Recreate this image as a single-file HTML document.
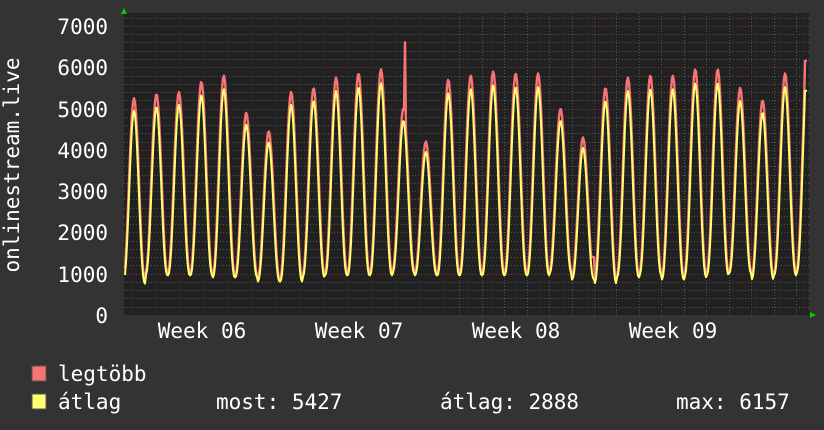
<!DOCTYPE html>
<html><head><meta charset="utf-8"><style>
html,body{margin:0;padding:0;background:#333;width:824px;height:430px;overflow:hidden}
svg{display:block}
text{font-family:"DejaVu Sans Mono","Liberation Mono",monospace;fill:#fff;font-size:21px}
</style></head><body>
<svg id="g" width="824" height="430" viewBox="0 0 824 430" xmlns="http://www.w3.org/2000/svg">
<rect width="824" height="430" fill="#333"/>
<rect x="124" y="13" width="685" height="302" fill="#212121"/>
<g id="grid"></g>
<path id="red" fill="none" stroke="#f87474" stroke-width="2.4" stroke-linejoin="round"/>
<path id="yel" fill="none" stroke="#ffff70" stroke-width="2" stroke-linejoin="round"/>
<polygon points="121,14 127,14 124,8" fill="#0c0"/>
<polygon points="810,312 810,318 816,315" fill="#0c0"/>
<g text-anchor="end">
<text x="108" y="323">0</text>
<text x="108" y="282">1000</text>
<text x="108" y="240">2000</text>
<text x="108" y="199">3000</text>
<text x="108" y="158">4000</text>
<text x="108" y="117">5000</text>
<text x="108" y="75">6000</text>
<text x="108" y="34">7000</text>
</g>
<g text-anchor="middle">
<text x="202" y="338">Week 06</text>
<text x="359" y="338">Week 07</text>
<text x="516" y="338">Week 08</text>
<text x="673" y="338">Week 09</text>
</g>
<text transform="translate(19,165) rotate(-90)" text-anchor="middle">onlinestream.live</text>
<rect x="32" y="366" width="14" height="15" fill="#f87474" stroke="#555" stroke-width="1"/>
<rect x="32" y="394" width="14" height="15" fill="#ffff70" stroke="#555" stroke-width="1"/>
<text x="58" y="381">legtöbb</text>
<text x="58" y="409">átlag</text>
<text x="216" y="409">most: 5427</text>
<text x="440" y="409">átlag: 2888</text>
<text x="676" y="409">max: 6157</text>
</svg>
<script>
var NS="http://www.w3.org/2000/svg",grid=document.getElementById('grid');
function ln(x1,y1,x2,y2,c){var l=document.createElementNS(NS,'line');l.setAttribute('x1',x1);l.setAttribute('y1',y1);l.setAttribute('x2',x2);l.setAttribute('y2',y2);l.setAttribute('stroke',c);l.setAttribute('stroke-width',1);l.setAttribute('stroke-dasharray','1,2');grid.appendChild(l);}
function Y(v){return 315-v*0.04129;}
for(var v=200;v<=7200;v+=200){var y=Math.round(Y(v))+0.5;if(y<13)break;ln(124,y,809,y,v%1000==0?'#7a3a3a':'#555');}
for(var k=-6;k<30;k++){var x=594+22.47*k;if(x<126||x>808)continue;x=Math.round(x)+0.5;ln(x,13,x,318,(k%7==0)?'#7a3a3a':'#555');}
var peaks=[5250,5350,5400,5650,5800,4900,4450,5400,5500,5750,5850,5950,5000,4200,5700,5800,5900,5850,5850,5000,4300,5500,5750,5800,5800,5950,5950,5500,5200,5850,6350,6300];
var lows=[800,1000,1000,1000,950,950,850,850,950,1000,1000,1000,1050,1000,1000,1000,1000,1000,1000,1050,900,800,950,1000,900,950,1000,1050,900,1000,1050,1050];
var r="",yl="";
for(var x=125;x<=807;x+=1){
 var t=(x-134)/22.45+0.5;var d=Math.floor(t);var f=t-d;
 var i=Math.max(0,Math.min(peaks.length-1,d));
 var pk=peaks[Math.max(0,Math.min(peaks.length-1,Math.round((x-134)/22.45)))];
 var lo=lows[i];
 var s=Math.pow((1-Math.cos(2*Math.PI*(f)))/2,1.1);
 var vr=lo+(pk-lo)*s, vy=lo-40+(pk*0.95-lo)*Math.pow(s,1.15);
 if(x==405){vr=6600;}
 if(x>=592&&x<=594){vr=1400;}
 if(x>=805){vr=6157;vy=5427;}
 r+=(r?"L":"M")+x+","+Y(vr).toFixed(1);
 yl+=(yl?"L":"M")+x+","+Y(vy).toFixed(1);
}
document.getElementById('red').setAttribute('d',r);
document.getElementById('yel').setAttribute('d',yl);
</script>
</body></html>
